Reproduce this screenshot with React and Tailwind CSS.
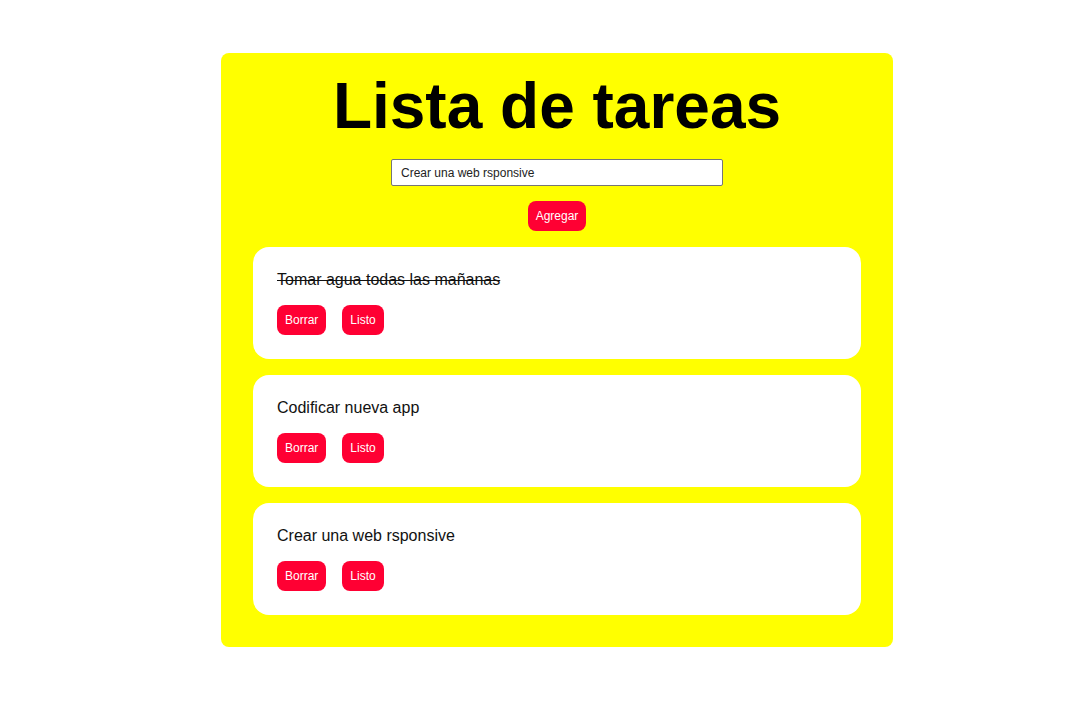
import { useState } from 'react';

const tareasIniciales = [
  { id: 1, texto: 'Tomar agua todas las mañanas', hecha: true },
  { id: 2, texto: 'Codificar nueva app', hecha: false },
  { id: 3, texto: 'Crear una web rsponsive', hecha: false },
];

const Boton = ({ children, onClick }) => (
  <button
    type="button"
    onClick={onClick}
    className="h-[30px] rounded-lg bg-[#ff0033] px-2 text-[12px] leading-[14px] text-white"
  >
    {children}
  </button>
);

const Tarea = ({ tarea, onBorrar, onListo }) => (
  <div className="rounded-2xl bg-white p-6">
    <p className={`text-[16px] leading-[18px] text-[#111] ${tarea.hecha ? 'line-through' : ''}`}>
      {tarea.texto}
    </p>
    <div className="mt-4 flex gap-4">
      <Boton onClick={onBorrar}>Borrar</Boton>
      <Boton onClick={onListo}>Listo</Boton>
    </div>
  </div>
);

export default function App() {
  const [tareas, setTareas] = useState(tareasIniciales);
  const [texto, setTexto] = useState('Crear una web rsponsive');

  const agregar = () => {
    if (!texto.trim()) return;
    setTareas([...tareas, { id: Date.now(), texto, hecha: false }]);
  };

  return (
    <div className="min-h-screen bg-white pt-[53px] font-['Liberation_Sans',Arial,sans-serif]">
      <div className="ml-[221px] flex w-[672px] flex-col items-center rounded-lg bg-[#ffff00] px-8 pt-4 pb-8">
        <h1 className="text-[64px] leading-[74px] font-bold text-black">Lista de tareas</h1>
        <input
          type="text"
          value={texto}
          onChange={(e) => setTexto(e.target.value)}
          className="mt-4 h-[27px] w-[332px] rounded-[2px] border border-[#767676] bg-white px-[9px] text-[12px] text-[#222] outline-none"
        />
        <div className="mt-[15px]">
          <Boton onClick={agregar}>Agregar</Boton>
        </div>
        <div className="mt-4 flex w-full flex-col gap-4">
          {tareas.map((t) => (
            <Tarea
              key={t.id}
              tarea={t}
              onBorrar={() => setTareas(tareas.filter((x) => x.id !== t.id))}
              onListo={() =>
                setTareas(tareas.map((x) => (x.id === t.id ? { ...x, hecha: !x.hecha } : x)))
              }
            />
          ))}
        </div>
      </div>
    </div>
  );
}
